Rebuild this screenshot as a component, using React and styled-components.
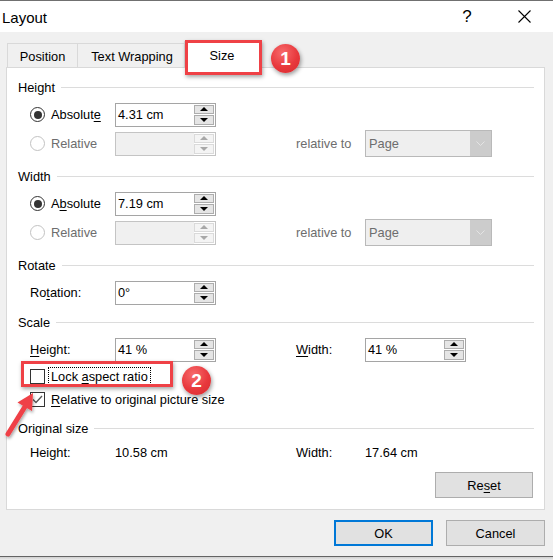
import React from 'react'
import styled, { createGlobalStyle } from 'styled-components'

const red = '#ef4146'

const GlobalStyle = createGlobalStyle`
  html, body {
    margin: 0;
    padding: 0;
    background: #fff;
  }
  body {
    font-family: "Liberation Sans", Arial, sans-serif;
    font-size: 12.8px;
    color: #000;
  }
`

const Window = styled.div`
  position: relative;
  width: 553px;
  height: 560px;
  overflow: hidden;
  box-sizing: border-box;
  display: flex;
  flex-direction: column;
  background: #f0f0f0;
  border-top: 1px solid #707070;
`

const TitleBar = styled.div`
  height: 31px;
  flex: none;
  display: flex;
  align-items: center;
  padding-left: 2px;
  background: #fff;
`

const Title = styled.div`
  font-size: 15px;
  margin-top: 2px;
  margin-right: auto;
`

const TitleButton = styled.div`
  width: 30px;
  height: 31px;
  display: flex;
  align-items: center;
  justify-content: center;
  font-size: 17px;
  margin-right: ${p => p.$mr || 0}px;
`

const Body = styled.div`
  height: 524px;
  flex: none;
  box-sizing: border-box;
  padding: 9px 8px 0 6px;
  display: flex;
  flex-direction: column;
`

const Tabs = styled.div`
  display: flex;
  align-items: flex-end;
  height: 27px;
  margin-left: 1px;
  position: relative;
  z-index: 2;
`

const Tab = styled.div`
  position: relative;
  box-sizing: border-box;
  width: ${p => p.$w}px;
  height: ${p => (p.$active ? 27 : 24)}px;
  margin-bottom: ${p => (p.$active ? 0 : 1)}px;
  margin-left: ${p => p.$ml || 0}px;
  border: 1px solid #d9d9d9;
  border-bottom: none;
  background: ${p => (p.$active ? '#fff' : '#f0f0f0')};
  display: flex;
  align-items: center;
  justify-content: center;
  padding-top: ${p => (p.$active ? 0 : 1)}px;
  z-index: ${p => (p.$active ? 2 : 1)};
`

const RedBox = styled.div`
  position: absolute;
  left: ${p => p.$l}px;
  top: ${p => p.$t}px;
  width: ${p => p.$w}px;
  height: ${p => p.$h}px;
  box-sizing: border-box;
  border: 3px solid ${red};
  box-shadow: 1px 2px 4px rgba(0, 0, 0, 0.35);
  pointer-events: none;
`

const Badge = styled.div`
  position: absolute;
  left: ${p => p.$l}px;
  top: ${p => p.$t}px;
  width: 29px;
  height: 29px;
  border-radius: 50%;
  background: radial-gradient(circle at 40% 30%, #f76a6c 0%, #e8383c 55%, #d62b30 100%);
  box-shadow: 1px 2px 4px rgba(0, 0, 0, 0.4);
  color: #fff;
  font-size: 19px;
  font-weight: bold;
  display: flex;
  align-items: center;
  justify-content: center;
  z-index: 3;
`

const Panel = styled.div`
  margin-top: -1px;
  background: #fff;
  border: 1px solid #d9d9d9;
  padding: 10px 0 11px;
  display: flex;
  flex-direction: column;
`

const Legend = styled.div`
  height: 18px;
  margin-top: ${p => p.$mt}px;
  padding: 0 10px 0 11px;
  display: flex;
  align-items: center;
  gap: 6px;

  &::after {
    content: '';
    flex: 1;
    height: 1px;
    background: #dcdcdc;
  }
`

const Row = styled.div`
  position: relative;
  height: ${p => p.$h || 29}px;
  margin-top: ${p => p.$mt || 0}px;
  padding-left: 23px;
  display: flex;
  align-items: center;
`

const LeftCell = styled.div`
  width: 85px;
  display: flex;
  align-items: center;
  gap: 6px;
  color: ${p => (p.$disabled ? '#6d6d6d' : '#000')};
`

const RightLabel = styled.div`
  margin-left: 80px;
  width: 69px;
  color: ${p => (p.$disabled ? '#6d6d6d' : '#000')};
`

const Value = styled.div`
  width: 101px;
`

const Key = styled.span`
  text-decoration: underline;
  text-underline-offset: 2px;
`

const Radio = styled.div`
  width: 15px;
  height: 15px;
  box-sizing: border-box;
  border-radius: 50%;
  border: 1px solid ${p => (p.$disabled ? '#c2c2c2' : '#333')};
  background: #fff;
  display: flex;
  align-items: center;
  justify-content: center;

  &::after {
    content: '';
    display: ${p => (p.$checked ? 'block' : 'none')};
    width: 8px;
    height: 8px;
    border-radius: 50%;
    background: #333;
  }
`

const Check = styled.div`
  width: 15px;
  height: 15px;
  box-sizing: border-box;
  border: 1px solid #333;
  background: #fff;
  display: flex;
  align-items: center;
  justify-content: center;
`

const CheckLabel = styled.div`
  margin-left: 4px;
  padding: 1px 2px 2px;
  outline: ${p => (p.$focus ? '1px dotted #000' : 'none')};
`

const InputBox = styled.div`
  width: 101px;
  height: 24px;
  box-sizing: border-box;
  border: 1px solid ${p => (p.$disabled ? '#c4c4c4' : '#a5a5a5')};
  background: ${p => (p.$disabled ? '#f0f0f0' : '#fff')};
  display: flex;
  align-items: center;
  padding-left: 2px;
`

const InputText = styled.div`
  flex: 1;
`

const Spin = styled.div`
  display: flex;
  flex-direction: column;
  gap: 1px;
  padding: 1px 1px 1px 0;
  align-self: stretch;
  justify-content: center;
  background: ${p => (p.$disabled ? '#fff' : 'transparent')};
`

const SpinBtn = styled.div`
  width: 20px;
  height: 10px;
  box-sizing: border-box;
  border: 1px solid ${p => (p.$disabled ? '#dadada' : '#adadad')};
  background: ${p => (p.$disabled ? '#f4f4f4' : '#e5e5e5')};
  display: flex;
  align-items: center;
  justify-content: center;

  &::after {
    content: '';
    border-left: 4px solid transparent;
    border-right: 4px solid transparent;
    ${p => (p.$down ? 'border-top' : 'border-bottom')}: 4px solid ${p => (p.$disabled ? '#a8a8a8' : '#000')};
  }
`

const SelectBox = styled.div`
  width: 127px;
  height: 27px;
  box-sizing: border-box;
  border: 1px solid #b9b9b9;
  background: #efefef;
  display: flex;
  align-items: center;
  color: #6d6d6d;
`

const SelectText = styled.div`
  flex: 1;
  padding-left: 3px;
`

const SelectArrow = styled.div`
  width: 21px;
  align-self: stretch;
  background: #cccccc;
  display: flex;
  align-items: center;
  justify-content: center;
`

const ButtonRow = styled.div`
  display: flex;
  justify-content: flex-end;
  gap: 13px;
  margin-top: ${p => p.$mt || 0}px;
  padding-right: ${p => p.$pr || 0}px;
`

const Button = styled.div`
  width: ${p => p.$w || 99}px;
  height: 26px;
  box-sizing: border-box;
  border: ${p => (p.$primary ? '2px solid #0078d7' : '1px solid #adadad')};
  background: #e1e1e1;
  display: flex;
  align-items: center;
  justify-content: center;
`

const BottomEdge = styled.div`
  height: 1px;
  background: #646464;
  flex: none;
`

const Shadow = styled.div`
  flex: 1;
  background: linear-gradient(#cfcfcf, #ececec);
`

const Arrow = styled.svg`
  position: absolute;
  left: 0;
  top: 385px;
  z-index: 4;
  overflow: visible;
`

const SpinInput = ({ value, disabled }) => (
  <InputBox $disabled={disabled}>
    <InputText>{value}</InputText>
    <Spin $disabled={disabled}>
      <SpinBtn $disabled={disabled} />
      <SpinBtn $disabled={disabled} $down />
    </Spin>
  </InputBox>
)

const Select = ({ value }) => (
  <SelectBox>
    <SelectText>{value}</SelectText>
    <SelectArrow>
      <svg width="9" height="5" viewBox="0 0 9 5">
        <polyline points="0.5,0.5 4.5,4.5 8.5,0.5" fill="none" stroke="#e4e4e4" strokeWidth="1" />
      </svg>
    </SelectArrow>
  </SelectBox>
)

const SizeBlock = ({ label, value }) => (
  <>
    <Row $mt={4}>
      <LeftCell>
        <Radio $checked />
        {label}
      </LeftCell>
      <SpinInput value={value} />
    </Row>
    <Row>
      <LeftCell $disabled>
        <Radio $disabled />
        <span>Relative</span>
      </LeftCell>
      <SpinInput disabled />
      <RightLabel $disabled>relative to</RightLabel>
      <Select value="Page" />
    </Row>
  </>
)

export default function App() {
  return (
    <Window>
      <GlobalStyle />
      <TitleBar>
        <Title>Layout</Title>
        <TitleButton $mr={27}>?</TitleButton>
        <TitleButton $mr={14}>
          <svg width="13" height="13" viewBox="0 0 13 13">
            <path d="M0.5 0.5 L12.5 12.5 M12.5 0.5 L0.5 12.5" stroke="#000" strokeWidth="1.1" />
          </svg>
        </TitleButton>
      </TitleBar>

      <Body>
        <Tabs>
          <Tab $w={71}>Position</Tab>
          <Tab $w={110} $ml={-1}>Text Wrapping</Tab>
          <Tab $w={76} $ml={-3} $active>
            Size
            <RedBox $l={0} $t={-2} $w={77} $h={35} />
            <Badge $l={86} $t={2}>1</Badge>
          </Tab>
        </Tabs>

        <Panel>
          <Legend $mt={0}>Height</Legend>
          <SizeBlock label={<span>Absolut<Key>e</Key></span>} value="4.31 cm" />

          <Legend $mt={9}>Width</Legend>
          <SizeBlock label={<span>A<Key>b</Key>solute</span>} value="7.19 cm" />

          <Legend $mt={9}>Rotate</Legend>
          <Row $mt={4}>
            <LeftCell>
              <span>Ro<Key>t</Key>ation:</span>
            </LeftCell>
            <SpinInput value="0°" />
          </Row>

          <Legend $mt={6}>Scale</Legend>
          <Row $mt={4}>
            <LeftCell>
              <span><Key>H</Key>eight:</span>
            </LeftCell>
            <SpinInput value="41 %" />
            <RightLabel><Key>W</Key>idth:</RightLabel>
            <SpinInput value="41 %" />
          </Row>
          <Row $h={23} $mt={1}>
            <Check />
            <CheckLabel $focus>Lock <Key>a</Key>spect ratio</CheckLabel>
            <RedBox $l={14} $t={-4} $w={152} $h={26} />
            <Badge $l={175} $t={1}>2</Badge>
          </Row>
          <Row $h={23}>
            <Check>
              <svg width="11" height="9" viewBox="0 0 11 9">
                <polyline points="1,4.5 4,7.5 10,1" fill="none" stroke="#555" strokeWidth="1.3" />
              </svg>
            </Check>
            <CheckLabel><Key>R</Key>elative to original picture size</CheckLabel>
          </Row>

          <Legend $mt={8}>Original size</Legend>
          <Row $h={23} $mt={4}>
            <LeftCell>Height:</LeftCell>
            <Value>10.58 cm</Value>
            <RightLabel>Width:</RightLabel>
            <Value>17.64 cm</Value>
          </Row>

          <ButtonRow $mt={8} $pr={11}>
            <Button $w={98}>Re<Key>s</Key>et</Button>
          </ButtonRow>
        </Panel>

        <ButtonRow $mt={10}>
          <Button $primary>OK</Button>
          <Button>Cancel</Button>
        </ButtonRow>
      </Body>

      <BottomEdge />
      <Shadow />

      <Arrow width="40" height="55" viewBox="0 0 40 55">
        <defs>
          <filter id="arrowShadow" x="-50%" y="-50%" width="200%" height="200%">
            <feDropShadow dx="1" dy="2" stdDeviation="1.5" floodColor="#000" floodOpacity="0.35" />
          </filter>
        </defs>
        <g filter="url(#arrowShadow)">
          <line x1="8" y1="48" x2="26" y2="19" stroke={red} strokeWidth="5" strokeLinecap="round" />
          <polygon points="33,7 32,25 17.5,16.5" fill={red} />
        </g>
      </Arrow>
    </Window>
  )
}
